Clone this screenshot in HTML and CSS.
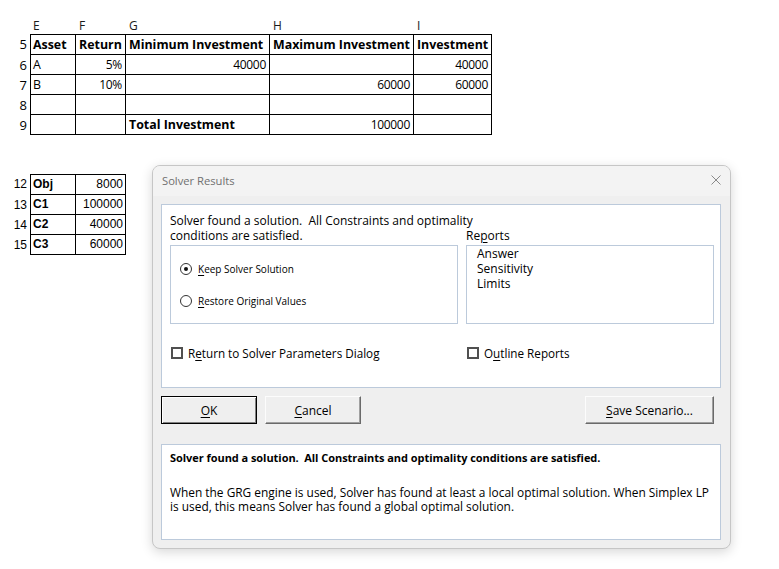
FILE: index.html
```html
<!DOCTYPE html>
<html>
<head>
<meta charset="utf-8">
<title>Solver Results</title>
<link rel="stylesheet" href="styles.css">
</head>
<body>
<div class="sheet">
  <div class="rn"></div><div class="cl">E</div><div class="cl">F</div><div class="cl">G</div><div class="cl">H</div><div class="cl">I</div>

  <div class="rn">5</div><div class="c first top b">Asset</div><div class="c top b">Return</div><div class="c top b">Minimum Investment</div><div class="c top b">Maximum Investment</div><div class="c top b">Investment</div>
  <div class="rn">6</div><div class="c first">A</div><div class="c r">5%</div><div class="c r">40000</div><div class="c"></div><div class="c r">40000</div>
  <div class="rn">7</div><div class="c first">B</div><div class="c r">10%</div><div class="c"></div><div class="c r">60000</div><div class="c r">60000</div>
  <div class="rn">8</div><div class="c first"></div><div class="c"></div><div class="c"></div><div class="c"></div><div class="c"></div>
  <div class="rn">9</div><div class="c first"></div><div class="c"></div><div class="c b">Total Investment</div><div class="c r">100000</div><div class="c"></div>
</div>

<div class="sheet2">
  <div class="rn">12</div><div class="c first top b">Obj</div><div class="c top r">8000</div>
  <div class="rn">13</div><div class="c first b">C1</div><div class="c r">100000</div>
  <div class="rn">14</div><div class="c first b">C2</div><div class="c r">40000</div>
  <div class="rn">15</div><div class="c first b">C3</div><div class="c r">60000</div>
</div>

<div class="dialog">
  <div class="titlebar">
    <span class="title">Solver Results</span>
    <svg class="close" width="10" height="10" viewBox="0 0 10 10"><path d="M0.5 0.5L9.5 9.5M9.5 0.5L0.5 9.5" stroke="#8a8a8a" stroke-width="1" fill="none"/></svg>
  </div>
  <div class="body">
    <div class="panel main">
      <div class="msg1">Solver found a solution.&nbsp; All Constraints and optimality</div>
      <div class="msg2">conditions are satisfied.</div>
      <div class="replabel">Re<u>p</u>orts</div>
      <div class="box radios">
        <div class="opt"><span class="radio on"></span><span><u>K</u>eep Solver Solution</span></div>
        <div class="opt"><span class="radio"></span><span><u>R</u>estore Original Values</span></div>
      </div>
      <div class="box reports">
        <div>Answer</div>
        <div>Sensitivity</div>
        <div>Limits</div>
      </div>
      <div class="chk"><span class="cbox"></span><span>R<u>e</u>turn to Solver Parameters Dialog</span></div>
      <div class="chk"><span class="cbox"></span><span>O<u>u</u>tline Reports</span></div>
    </div>
    <div class="buttons">
      <div class="btn default"><u>O</u>K</div>
      <div class="btn"><u>C</u>ancel</div>
      <div class="btn save"><u>S</u>ave Scenario...</div>
    </div>
    <div class="panel info">
      <div class="bold">Solver found a solution.&nbsp; All Constraints and optimality conditions are satisfied.</div>
      <div class="desc">When the GRG engine is used, Solver has found at least a local optimal solution. When Simplex LP is used, this means Solver has found a global optimal solution.</div>
    </div>
  </div>
</div>
</body>
</html>
```
FILE: styles.css
```css
* { box-sizing: border-box; }
html, body { margin: 0; padding: 0; background: #fff; }
body { position: relative; width: 779px; height: 569px; overflow: hidden; font-family: "Open Sans", sans-serif; color: #000; }

.sheet {
  display: grid;
  grid-template-columns: 30px 46px 50px 144px 144px 78px;
  grid-template-rows: 18px 21px 20px 20px 20px 20px;
  padding-top: 16px;
  font-family: "Open Sans", sans-serif;
  font-size: 12.4px;
}
.sheet2 {
  display: grid;
  grid-template-columns: 30px 46px 50px;
  grid-template-rows: 21px 20px 20px 20px;
  margin-top: 39px;
  font-family: "Liberation Sans", Arial, sans-serif;
  font-size: 12px;
}
.sheet .rn { font-size: 13px; }
.rn { text-align: right; padding-right: 3px; line-height: 20px; font-size: 12px; }
.cl { font-size: 12px; line-height: 20px; padding-left: 3px; color: #1a1a1a; }
.c {
  border-right: 1px solid #000;
  border-bottom: 1px solid #000;
  padding: 0 2px 0 3px;
  line-height: 19px;
  white-space: nowrap;
  overflow: hidden;
}
.c.first { border-left: 1px solid #000; padding-left: 2px; }
.c.top { border-top: 1px solid #000; }
.c.b { font-weight: bold; }
.c.r { text-align: right; }
.sheet .c.r { font-size: 12px; letter-spacing: -0.3px; padding-right: 3px; }

.dialog {
  position: absolute;
  left: 152px;
  top: 165px;
  width: 579px;
  height: 384px;
  border: 1px solid #c6c6c6;
  border-radius: 8px;
  background: #efefef;
  box-shadow: 0 3px 12px rgba(0,0,0,0.16);
  overflow: hidden;
  font-family: "Open Sans", sans-serif;
  font-size: 12px;
}
.titlebar {
  height: 30px;
  background: #f3f3f3;
  display: flex;
  align-items: center;
  justify-content: space-between;
  padding: 0 9px 2px 9px;
}
.title { color: #707070; font-size: 11.2px; }
.close { display: block; }
.body { padding: 8px 9px 8px 8px; }
.panel { background: #fff; border: 1px solid #bccadb; }
.main {
  height: 184px;
  display: grid;
  grid-template-columns: 288px 248px;
  grid-template-rows: 15px 15px 81px 16px;
  column-gap: 8px;
  row-gap: 0;
  padding: 8px 6px 0 8px;
}
.main .box { margin-top: 2px; }
.main .chk { margin-top: 21px; }
.msg1 { grid-area: 1 / 1 / 2 / 3; line-height: 15px; white-space: nowrap; }
.msg2 { grid-area: 2 / 1 / 3 / 2; line-height: 15px; }
.replabel { grid-area: 2 / 2 / 3 / 3; line-height: 15px; }
.box { border: 1px solid #bccadb; }
.radios { padding: 15px 0 0 9px; display: flex; flex-direction: column; gap: 16px; font-size: 10px; }
.opt { display: flex; align-items: center; height: 16px; gap: 6px; }
.radio {
  width: 12px; height: 12px; border-radius: 50%;
  border: 1.5px solid #333; background: #fff; position: relative; flex: none;
}
.radio.on::after {
  content: ""; position: absolute; left: 2.5px; top: 2.5px; width: 4px; height: 4px; border-radius: 50%; background: #111;
}
.reports { padding: 0 0 0 10px; line-height: 15px; }
.chk { display: flex; align-items: center; gap: 5px; height: 16px; padding-left: 1px; font-size: 11.7px; }
.cbox { width: 12px; height: 12px; border: 2px solid #505050; background: #fff; flex: none; }

.buttons { display: flex; margin-top: 8px; height: 28px; gap: 8px; }
.btn {
  width: 96px; height: 28px;
  background: #efefef;
  border: 1px solid;
  border-color: #fcfcfc #6a6a6a #6a6a6a #fcfcfc;
  box-shadow: inset -1px -1px 0 #a0a0a0;
  display: flex; align-items: center; justify-content: center;
}
.btn.default {
  border-color: #000;
  box-shadow: inset 1px 1px 0 #fff, inset -1px -1px 0 #808080;
}
.btn.save { width: 129px; margin-left: auto; margin-right: 7px; }

.info { margin-top: 20px; height: 96px; padding: 5px 6px 0 8px; }
.info .bold { font-weight: bold; line-height: 15px; font-size: 11px; letter-spacing: -0.05px; }
.info .desc { margin-top: 20px; line-height: 14px; font-size: 11.9px; }
u { text-decoration-thickness: 1px; text-underline-offset: 2px; }
```
